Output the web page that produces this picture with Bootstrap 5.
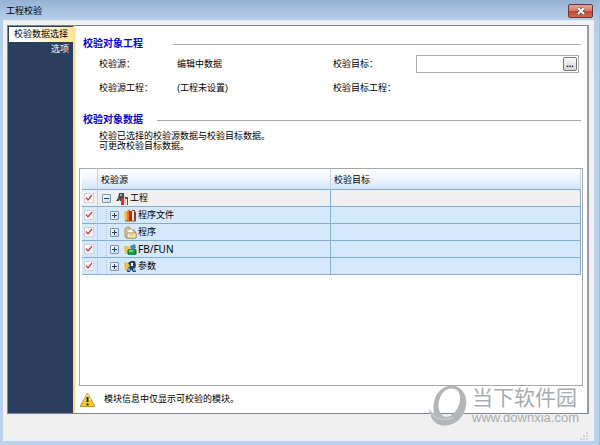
<!DOCTYPE html>
<html lang="zh-CN">
<head>
<meta charset="utf-8">
<meta name="viewport" content="width=device-width, initial-scale=1">
<title>工程校验</title>
<link href="https://cdn.jsdelivr.net/npm/bootstrap@5.3.0/dist/css/bootstrap.min.css" rel="stylesheet">
<style>
body { font: 9px/11px "Liberation Sans", "Noto Sans CJK SC", sans-serif; color: #000; }
.dialog { background: linear-gradient(#94b1d3 0, #a3bedd 8px, #b5cee8 20px, #b9d1ea 80px, #b9d1ea 100%); padding: 0 5px 4px 3px; border-right: 1px solid #8fc8e4; }
.titlebar { height: 20px; padding: 2px 1px 0 3px; }
.titlebar h1 { font-size: 9px; line-height: 18px; }
.close-btn { width: 25px; height: 14px; border: 1px solid #6c3537; border-radius: 2px; background: linear-gradient(#e0a595, #d77e68 46%, #bf4630 50%, #cf6a50); margin-top: 2px; }
.client { background: #f0f0f0; border-top: 1px solid #dfeaf4; padding: 4px 5px 0 4px; }
.pane { border: 1px solid #7c8793; border-right: 2px solid #929aa4; background: #fff; }
.side { width: 67px; background: #2c3e5e; background-image: radial-gradient(#304262 1px, transparent 1px); background-size: 3px 3px; border-right: 2px solid #f7dc8c; }
.side .nav-link { font-size: 9px; line-height: 15px; padding: 0 4px 0 0; border-radius: 0; color: #f2f5fa; text-align: right; }
.side .nav-link.active { color: #000; background: linear-gradient(90deg, #fff 25%, #ffe58f); margin: 1px -2px 0 1px; padding-right: 7px; }
.main { padding: 12px 4px 0 3px; border-left: 1px solid #fff4d0; }
.section-title { font-size: 10px; line-height: 12px; font-weight: 700; color: #0808c8; }
.rule { height: 1px; background: #a9a9a9; margin-right: 2px; }
.rule-a { margin-left: 30px; }
.rule-b { margin-left: 14px; }
.fields { padding: 2px 4px 0 20px; }
.field { min-height: 24px; }
.name { width: 78px; }
.target-field { width: 246px; }
.picker { width: 163px; height: 18px; border: 1px solid #adadad; padding: 1px; }
.picker input { font-size: 9px; background: transparent; outline: 0; min-width: 0; }
.picker button { width: 14px; height: 14px; border: 1px solid #777; border-radius: 2px; background: linear-gradient(#fafafa, #d5d5d5); font-size: 9px; line-height: 7px; font-weight: 700; }
.second { padding-top: 14px; }
.note { line-height: 10px; padding: 5px 0 0 20px; margin-bottom: 17px; }
.grid-box { border: 1px solid #a8a8a8; padding: 0 1px 0 2px; }
.tree { table-layout: fixed; width: 100%; border-collapse: separate; border-spacing: 0; }
.tree th { height: 21px; background: linear-gradient(#fff, #eef5fe 50%, #d2e4fb); font-weight: 400; border-bottom: 1px solid #86aed4; border-right: 1px solid #bed4ed; padding: 2px 0 0 3px; }
.tree td { height: 17px; padding: 0; border-right: 1px solid #83add3; border-bottom: 1px solid #83add3; background: #d6e8fe; }
.tree .root-row td { background: #f0f0f0; }
.tree td:first-child { border-right-color: #b8d2ee; }
.c-check { width: 16px; }
.c-target { width: 250px; }
.tree input { appearance: none; width: 10px; height: 10px; margin: 0 0 0 2px; display: block; border: 1px solid #d2d2d7; background: #fafafa url("data:image/svg+xml,%3Csvg xmlns='http://www.w3.org/2000/svg' viewBox='0 0 8 8'%3E%3Cpath d='M1 3.5l2 2.5 4-5' fill='none' stroke='%23d63f48' stroke-width='1.3'/%3E%3C/svg%3E"); }
.twisty { width: 9px; height: 9px; border: 1px solid #7b93b5; border-radius: 1px; background: linear-gradient(135deg, #fff, #c9d8ea); padding: 0; }
.twisty svg { display: block; width: 7px; height: 7px; }
.node { padding-left: 4px; height: 16px; }
.node .glyph { width: 13px; height: 13px; margin: 0 1px 0 5px; }
.child { margin-left: 4px; border-left: 1px dotted #b2c2d4; padding-left: 3px; }
.latin { font-family: "Noto Sans", sans-serif; font-size: 10px; }
.notice { height: 27px; }
.footer { height: 27px; }
.grip { right: 1px; bottom: 1px; }
.watermark { right: 20px; bottom: 18px; color: #a9acaf; pointer-events: none; }
.brand-cn { font-size: 21px; line-height: 24px; font-weight: 400; }
.brand-url { font-size: 13px; line-height: 15px; }
</style>
<script src="https://cdn.jsdelivr.net/npm/bootstrap@5.3.0/dist/js/bootstrap.bundle.min.js"></script>
</head>
<body>
<div class="dialog vh-100 d-flex flex-column position-relative">
  <header class="titlebar d-flex justify-content-between align-items-start">
    <h1 class="m-0 fw-normal">工程校验</h1>
    <button class="close-btn d-flex align-items-center justify-content-center p-0" type="button" aria-label="关闭">
      <svg width="10" height="8" viewBox="0 0 10 8"><path d="M2 1l6 6M8 1L2 7" stroke="#6b4545" stroke-width="3.2"/><path d="M2 1l6 6M8 1L2 7" stroke="#fff" stroke-width="2"/></svg>
    </button>
  </header>
  <div class="client flex-grow-1 d-flex flex-column">
    <div class="pane flex-grow-1 d-flex">
      <nav class="side nav flex-column flex-nowrap flex-shrink-0" aria-label="页面">
        <a class="nav-link active" href="#pick">校验数据选择</a>
        <a class="nav-link" href="#options">选项</a>
      </nav>
      <main class="main flex-grow-1 d-flex flex-column" id="pick">
        <div class="d-flex align-items-center ps-1">
          <h2 class="section-title m-0">校验对象工程</h2><div class="rule rule-a flex-grow-1"></div>
        </div>
        <div class="fields">
          <div class="field d-flex align-items-center">
            <div class="name">校验源：</div><div class="flex-grow-1">编辑中数据</div>
            <div class="target-field d-flex align-items-center">
              <label for="target" class="flex-grow-1">校验目标：</label>
              <div class="picker d-flex align-items-center">
                <input id="target" type="text" class="border-0 p-0 flex-grow-1">
                <button type="button" class="p-0 flex-shrink-0" aria-label="浏览">...</button>
              </div>
            </div>
          </div>
          <div class="field d-flex align-items-center">
            <div class="name">校验源工程：</div><div class="flex-grow-1">(工程未设置)</div>
            <div class="target-field">校验目标工程：</div>
          </div>
        </div>
        <div class="second d-flex align-items-center ps-1">
          <h2 class="section-title m-0">校验对象数据</h2><div class="rule rule-b flex-grow-1"></div>
        </div>
        <p class="note">校验已选择的校验源数据与校验目标数据。<br>可更改校验目标数据。</p>
        <div class="grid-box flex-grow-1">
          <table class="tree">
            <colgroup><col class="c-check"><col><col class="c-target"></colgroup>
            <thead><tr><th></th><th scope="col">校验源</th><th scope="col">校验目标</th></tr></thead>
            <tbody>
              <tr class="root-row">
                <td><input type="checkbox" checked aria-label="选择工程"></td>
                <td><div class="node d-flex align-items-center">
                  <button type="button" class="twisty" aria-label="折叠"><svg viewBox="0 0 7 7"><path d="M1 3.5h5" stroke="#27406e"/></svg></button>
                  <svg class="glyph" viewBox="0 0 13 13"><path d="M3 1h5v6H6v2H4V7L3 9H0l2-3z" fill="#4c4c4c"/><path d="M4 2h2v2H4z" fill="#aaa"/><path d="M5 6h3v7H5z" fill="#d9352c"/><path d="M8 4h2v9H8z" fill="#f0c4be"/><path d="M9 5h3v8h-1V7H9z" fill="#555"/></svg>
                  <span>工程</span></div></td><td></td>
              </tr>
              <tr>
                <td><input type="checkbox" checked aria-label="选择程序文件"></td>
                <td><div class="node d-flex align-items-center"><div class="child d-flex align-items-center">
                  <button type="button" class="twisty" aria-label="展开"><svg viewBox="0 0 7 7"><path d="M1 3.5h5M3.5 1v5" stroke="#27406e"/></svg></button>
                  <svg class="glyph" viewBox="0 0 13 13"><path d="M0 3l3-1 2 2v8H1z" fill="#edb945"/><path d="M3 2l3-2v12H3z" fill="#f37628"/><path d="M5 2h3v10H5z" fill="#c9231e"/><path d="M8 2h2v10H8z" fill="#fff0df"/><path d="M10 2l2 1v9h-2z" fill="#9c3430"/><path d="M8 1h3v1H8z" fill="#b5342e"/><path d="M1 12h11" stroke="#895d26"/></svg>
                  <span>程序文件</span></div></div></td><td></td>
              </tr>
              <tr>
                <td><input type="checkbox" checked aria-label="选择程序"></td>
                <td><div class="node d-flex align-items-center"><div class="child d-flex align-items-center">
                  <button type="button" class="twisty" aria-label="展开"><svg viewBox="0 0 7 7"><path d="M1 3.5h5M3.5 1v5" stroke="#27406e"/></svg></button>
                  <svg class="glyph" viewBox="0 0 13 13"><path d="M1 3l2-2h2l1 2 4 1 2 3v5H2L1 10z" fill="#e9ce78" stroke="#98783a" stroke-width=".8"/><path d="M3 4l5-1 2 4H4z" fill="#fff" stroke="#9aa5a8" stroke-width=".6"/><path d="M3 7h9v5H3z" fill="#f8edbd" stroke="#a98437" stroke-width=".7"/><path d="M5 9h5" stroke="#c9b27b"/></svg>
                  <span>程序</span></div></div></td><td></td>
              </tr>
              <tr>
                <td><input type="checkbox" checked aria-label="选择FB/FUN"></td>
                <td><div class="node d-flex align-items-center"><div class="child d-flex align-items-center">
                  <button type="button" class="twisty" aria-label="展开"><svg viewBox="0 0 7 7"><path d="M1 3.5h5M3.5 1v5" stroke="#27406e"/></svg></button>
                  <svg class="glyph" viewBox="0 0 13 13"><path d="M0 3h4l1 1h6v7H1z" fill="#ecc250"/><path d="M6 3l5-2 1 4-4 2z" fill="#2e8bc5"/><path d="M4 6h8v6H4z" fill="#239545"/><path d="M3 8h2M3 10h2M11 8h2M11 10h2" stroke="#15652d"/><path d="M5 7h4v2H5z" fill="#7bd286"/></svg>
                  <span class="latin">FB/FUN</span></div></div></td><td></td>
              </tr>
              <tr>
                <td><input type="checkbox" checked aria-label="选择参数"></td>
                <td><div class="node d-flex align-items-center"><div class="child d-flex align-items-center">
                  <button type="button" class="twisty" aria-label="展开"><svg viewBox="0 0 7 7"><path d="M1 3.5h5M3.5 1v5" stroke="#27406e"/></svg></button>
                  <svg class="glyph" viewBox="0 0 13 13"><path d="M0 3l3-1 2 2h3v7H1z" fill="#ebbd4c"/><path d="M4 3l3-2h4l1 4-1 4 1 3H9L7 9l-1 3H3l1-4 2-2z" fill="#223f68"/><path d="M7 3h2v3H7z" fill="#fff"/><path d="M4 8h2v3H4zM9 8h2v3H9z" fill="#5d9bd5"/></svg>
                  <span>参数</span></div></div></td><td></td>
              </tr>
            </tbody>
          </table>
        </div>
        <div class="notice d-flex align-items-center gap-2">
          <svg width="17" height="16" viewBox="0 0 17 16"><path d="M8.500 1L16 14.500H1z" fill="#f8ca27" stroke="#b99a45" stroke-linejoin="round"/><path d="M8.500 2L12 8 5 9z" fill="#fbe37b"/><path d="M8.500 5v5M8.500 11.500v2" stroke="#29230e" stroke-width="2"/></svg>
          <span>模块信息中仅显示可校验的模块。</span>
        </div>
      </main>
    </div>
    <footer class="footer position-relative flex-shrink-0">
      <svg class="grip position-absolute" width="8" height="8" viewBox="0 0 8 8"><path d="M6 0h2v2H6zM3 3h2v2H3zM6 3h2v2H6zM0 6h2v2H0zM3 6h2v2H3zM6 6h2v2H6z" fill="#d2d2d2"/></svg>
    </footer>
  </div>
  <div class="watermark position-absolute d-flex align-items-center">
    <svg width="40" height="43" viewBox="0 0 41 43"><path fill-rule="evenodd" d="M24 1C34 1 41 11 39 22 37 34 28 42 17 42 8 42 2 36 1 24 3 28 4 29 6 29 4 14 11 2 24 1zM24 4C15 4 10 15 11 24 12 31 17 35 23 32 30 28 35 17 32 9 30 5 27 4 24 4z" fill="#b3b6b9"/><path d="M3 30Q12 39 26 34" fill="none" stroke="#d1d3d4"/></svg>
    <div class="ps-1"><div class="brand-cn">当下软件园</div><div class="brand-url">www.downxia.com</div></div>
  </div>
</div>
</body>
</html>
